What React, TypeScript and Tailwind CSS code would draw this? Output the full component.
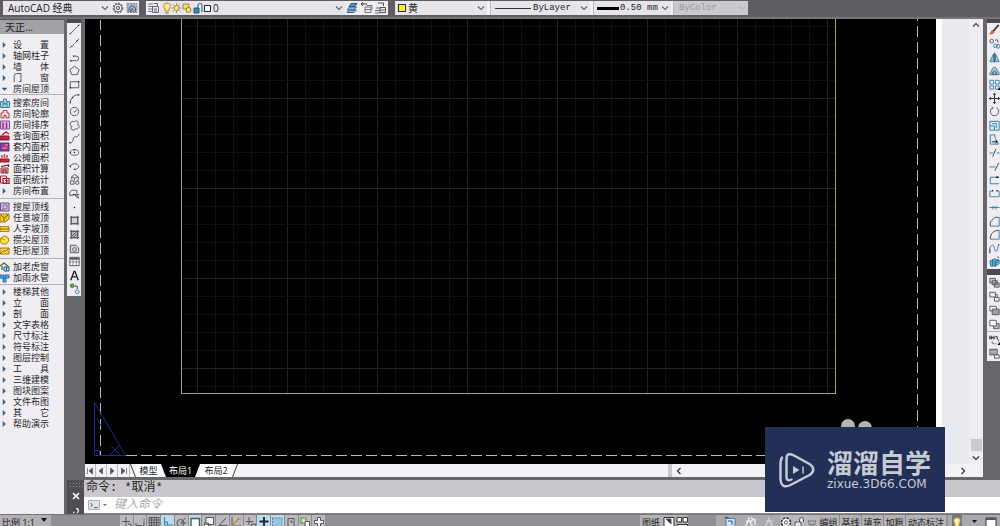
import type { ReactNode } from "react";
import clsx from "clsx";

/* ---------- shared bits ---------- */

type IconProps = { children: ReactNode; box?: number; className?: string };

function Icon({ children, box = 14, className = "size-3.5" }: IconProps) {
  return (
    <svg
      viewBox={`0 0 ${box} ${box}`}
      className={clsx("shrink-0", className)}
      fill="none"
      stroke="#55555c"
      strokeWidth="1"
      aria-hidden="true"
    >
      {children}
    </svg>
  );
}

function Chevron({ className = "text-[#6b6a70]" }: { className?: string }) {
  return (
    <svg viewBox="0 0 8 8" className={clsx("size-2 shrink-0", className)} fill="none" stroke="currentColor" strokeWidth="1.2" aria-hidden="true">
      <path d="M1 2.5 4 5.5 7 2.5" />
    </svg>
  );
}

/* ---------- top toolbar ---------- */

type ComboProps = {
  label: string;
  value: string;
  className: string;
  selectClass?: string;
  icon?: ReactNode;
  disabled?: boolean;
};

function Combo({ label, value, className, selectClass, icon, disabled }: ComboProps) {
  return (
    <div className={clsx("flex h-full items-center pr-0.5", disabled ? "bg-[#cbc9cd]" : "bg-[#e7e5e9]", className)}>
      {icon}
      <select
        aria-label={label}
        disabled={disabled}
        className={clsx("h-full min-w-0 flex-1 appearance-none bg-transparent leading-3 outline-none", disabled ? "text-[#99979c]" : "text-[#222226]", selectClass)}
      >
        <option>{value}</option>
      </select>
      <Chevron className={disabled ? "text-[#b5b3b8]" : "text-[#6b6a70]"} />
    </div>
  );
}

function ToolButton({ label, children }: { label: string; children: ReactNode }) {
  return (
    <button type="button" aria-label={label} className="flex shrink-0 items-center justify-center">
      {children}
    </button>
  );
}

const mono = "font-['Liberation_Mono','Noto_Sans_CJK_SC',monospace] text-[9px]";

function TopBar() {
  return (
    <header className="flex h-[19px] shrink-0 items-start border-b-2 border-[#77757a] bg-[#5f5d62] pt-px pl-[3px]">
      <div className="flex h-3.5 w-[136px] shrink-0 items-center bg-[#efedf1]">
        <Combo label="工作空间" value="AutoCAD 经典" className="w-[108px]" selectClass="pl-[5px] text-[10px]" />
        <ToolButton label="工作空间设置">
          <Icon>
            <circle cx="7" cy="7" r="4.6" strokeDasharray="2 1" strokeWidth="1.6" stroke="#77767c" />
            <circle cx="7" cy="7" r="4" stroke="#77767c" />
            <circle cx="7" cy="7" r="1.6" />
          </Icon>
        </ToolButton>
        <ToolButton label="我的工作空间">
          <Icon>
            <path d="M2 2.5h10v9H2z" fill="#a9b6c6" stroke="#7d8794" strokeDasharray="2 1" />
            <path d="M4 11V7l3-2.5L10.500 7v4M6 11V8h2v3" stroke="#4c5a6c" />
          </Icon>
        </ToolButton>
      </div>

      <div className="ml-[7px] flex h-3.5 w-[242px] shrink-0 items-center bg-[#efedf1]">
        <ToolButton label="图层特性管理器">
          <Icon>
            <path d="M2 3h5M2 5.500h5M2 8h4M2 10.500h4" stroke="#6c7d92" strokeWidth="1.2" />
            <path d="M6.500 5.500h6v6h-6zM8 2.500h3.500v3M8 8h3M8 10h3" stroke="#5e6671" />
          </Icon>
        </ToolButton>
        <Combo
          label="图层"
          value="0"
          className="w-[185px]"
          selectClass="pl-px text-[10px]"
          icon={
            <svg viewBox="0 0 50 14" className="ml-0.5 h-3.5 w-[50px] shrink-0" fill="none" aria-hidden="true">
              <path d="M3 8C.5 5 2 2 5 2s4.500 3 2 6v2H3z" fill="#ffe98c" stroke="#b08e3c" />
              <path d="M3.500 12h3" stroke="#666" />
              <circle cx="14.500" cy="7" r="2.500" fill="#ffe47a" stroke="#a88a44" />
              <path d="M14.500 2v2M14.500 10v2M9.500 7h2M17.500 7h2M11 3.500l1.300 1.300M16.700 9.200 18 10.500M18 3.500l-1.300 1.300M12.300 9.200 11 10.500" stroke="#a88a44" />
              <path d="M21 3h6v5h-6z" fill="#f5d878" stroke="#a58a4a" />
              <circle cx="26.500" cy="9" r="2.500" fill="#ffe06b" stroke="#8f7947" />
              <path d="M32 7h5v5h-5z" fill="#3c86ad" stroke="#2b5b78" />
              <path d="M36 7V4.500a1.800 1.800 0 0 1 4 0V11" stroke="#3f6d86" strokeWidth="1.200" />
              <path d="M42.500 4.500h6v6h-6z" fill="#fff" stroke="#222" />
            </svg>
          }
        />
        <div className="flex">
          <ToolButton label="将对象的图层置为当前">
            <Icon>
              <path d="m2 9 2.500-3h7L9 9zM2 11.500 4.500 9h7L9 11.500z" fill="#8cb6d2" stroke="#3c6c8c" />
              <path d="m4 5.500 2-3h6l-2 3z" fill="#5694ba" stroke="#2f5f80" />
            </Icon>
          </ToolButton>
          <ToolButton label="上一个图层">
            <Icon>
              <path d="M2 3h6M4 1.500 2 3l2 1.500" stroke="#333" />
              <path d="M6 6h6v5.500H6zM6 8.500h6M8 5.500V4.500h5v4" stroke="#77757b" />
            </Icon>
          </ToolButton>
          <ToolButton label="图层状态管理器">
            <Icon>
              <path d="M2 9.500h5M2 12h5M3 7h4" stroke="#666" />
              <path d="M7 6.500h5.500v5H7zM5 2h5.500v3M7.500 9h5" stroke="#555" />
            </Icon>
          </ToolButton>
        </div>
      </div>

      <div className="ml-[7px] flex h-3.5 w-[353px] shrink-0 items-center bg-[#f4f2f5]">
        <Combo
          label="颜色"
          value="黄"
          className="w-[92px]"
          selectClass="pl-0.5 font-['Noto_Sans_CJK_SC',sans-serif] text-[10px]"
          icon={<span className="ml-[3px] size-2 shrink-0 border border-[#333] bg-[#f6f032]" />}
        />
        <Combo
          label="线型"
          value="ByLayer"
          className="ml-[3px] w-[100px] border-l border-[#b9b7bb]"
          selectClass={clsx("pl-0.5", mono)}
          icon={<span className="ml-1 h-px w-9 shrink-0 bg-[#333]" />}
        />
        <Combo
          label="线宽"
          value="0.50 mm"
          className="ml-[3px] w-[78px] border-l border-[#b9b7bb]"
          selectClass={clsx("pl-px", mono)}
          icon={<span className="ml-[3px] h-[3px] w-[22px] shrink-0 bg-black" />}
        />
        <Combo label="打印样式" value="ByColor" disabled className="ml-0.5 flex-1 border-l border-[#b9b7bb]" selectClass={clsx("pl-[5px]", mono)} />
      </div>
    </header>
  );
}

/* ---------- left menu ---------- */

type MenuEntry = { name: string; icon?: ReactNode; open?: boolean };

const menuGroups: MenuEntry[][] = [
  [{ name: "设　　置" }, { name: "轴网柱子" }, { name: "墙　　体" }, { name: "门　　窗" }, { name: "房间屋顶", open: true }],
  [
    { name: "搜索房间", icon: <path d="M.5 9.500v-6h3V1h3v2.500h3v6zM3 9V6h4v3M2 5h6" stroke="#3f7ca0" fill="#b8d7e6" /> },
    { name: "房间轮廓", icon: <path d="M1 9V4h2V1.500h4V4h2v5H6V6.500H4V9z" stroke="#b03848" fill="#f8dfe2" /> },
    {
      name: "房间排序",
      icon: (
        <>
          <path d="M.5 1h9v8h-9z" fill="#d6bfe8" stroke="#7a4ba8" />
          <path d="M3 2.500v6M6.500 2.500v6" stroke="#b02060" strokeWidth="1.500" />
        </>
      ),
    },
    {
      name: "查询面积",
      icon: (
        <>
          <path d="M0 5h9v4H0z" fill="#c4283c" stroke="#7d1c30" />
          <path d="M2 4 6 1l3 2M3 7h5" stroke="#c4283c" strokeWidth="1.500" />
        </>
      ),
    },
    {
      name: "套内面积",
      icon: (
        <>
          <path d="M0 1h9v8H0z" fill="#8a3a9a" stroke="#4e3090" />
          <path d="M2 6h5M5 3h3" stroke="#f4637a" strokeWidth="2" />
        </>
      ),
    },
    {
      name: "公摊面积",
      icon: (
        <>
          <path d="M0 6h9v3H0z" fill="#c4283c" stroke="#8c1c30" />
          <path d="M2 5V2M4.500 5V1M7 5V2" stroke="#d43848" strokeWidth="1.500" />
        </>
      ),
    },
    {
      name: "面积计算",
      icon: (
        <>
          <path d="M1 4h7v5H1z" fill="#f0b0b4" stroke="#b02838" />
          <path d="M1 2.500 8.500 1v2M3 9V6h3v3" stroke="#4b2830" strokeWidth="1.200" />
        </>
      ),
    },
    {
      name: "面积统计",
      icon: (
        <>
          <path d="M.5 1h6v7h-6z" fill="#fbe6e8" stroke="#b02838" />
          <path d="M3 3.500h6v5H3zM5 5.500h2v2" stroke="#a01c2c" strokeWidth="1.200" />
        </>
      ),
    },
    { name: "房间布置" },
  ],
  [
    {
      name: "搜屋顶线",
      icon: (
        <>
          <path d="M.5 1h8.500v8H.5z" fill="#c9cdf0" stroke="#4d54a0" />
          <path d="M3 3h4v4H3zM1 9l2-2" stroke="#c04858" />
        </>
      ),
    },
    {
      name: "任意坡顶",
      icon: (
        <>
          <path d="M0 1h9v5L5 9H0z" fill="#f3cc2e" stroke="#a07808" />
          <path d="m1 2 3 3 4-3M4 5v3" stroke="#7d5c04" />
        </>
      ),
    },
    {
      name: "人字坡顶",
      icon: (
        <>
          <path d="M0 2.500h9v5H0z" fill="#f8d644" stroke="#b08408" />
          <path d="M0 5h9" stroke="#8f6c08" />
        </>
      ),
    },
    {
      name: "攒尖屋顶",
      icon: (
        <>
          <path d="M1 3 4 .8 8 2.500 9 6 6 9H2L0 6z" fill="#ffe03a" stroke="#b08408" />
          <path d="M4.500 5 1 3" stroke="#b08408" />
        </>
      ),
    },
    {
      name: "矩形屋顶",
      icon: (
        <>
          <path d="M0 2h9v6H0z" fill="#f8d644" stroke="#a07808" />
          <path d="m0 8 3-3h3l3-3" stroke="#8f6c08" />
        </>
      ),
    },
  ],
  [
    {
      name: "加老虎窗",
      icon: (
        <>
          <path d="M0 4 4 1l5 4M2 4v4" stroke="#4c6a2c" strokeWidth="1.300" />
          <path d="M4 5h5v4H4zM6.500 5v4" fill="#b9dcf0" stroke="#1e5f8c" />
        </>
      ),
    },
    { name: "加雨水管", icon: <path d="M0 2h4v3H0zM5 2h4v3H5zM3 5h3v4H3z" fill="#5aa4dc" stroke="#2470b0" /> },
  ],
  [
    { name: "楼梯其他" },
    { name: "立　　面" },
    { name: "剖　　面" },
    { name: "文字表格" },
    { name: "尺寸标注" },
    { name: "符号标注" },
    { name: "图层控制" },
    { name: "工　　具" },
    { name: "三维建模" },
    { name: "图块图案" },
    { name: "文件布图" },
    { name: "其　　它" },
    { name: "帮助演示" },
  ],
];

const groupSpacing = ["", "py-0.5", "py-0.5", "pt-0.5 pb-px", "pt-px"];

function MenuRow({ name, icon, open }: MenuEntry) {
  return (
    <li>
      <button type="button" className="flex h-[11px] w-full items-center gap-[3px] text-left text-[9px] leading-[11px] whitespace-nowrap text-[#26262a]">
        <Icon box={10} className="size-2.5">
          {icon ?? <path d={open ? "M2 4h5L4.500 6.500z" : "M3 2.500v5L5.500 5z"} fill="#2f5f86" stroke="#2f5f86" strokeWidth="0.500" />}
        </Icon>
        {name}
      </button>
    </li>
  );
}

function SideMenu() {
  return (
    <aside className="flex w-16 shrink-0 flex-col border-t border-[#55535a] bg-[#f0eef2]">
      <h2 className="h-3.5 bg-[#a3a1a5] pl-[5px] text-[10px] leading-[14px] text-[#222226]">天正...</h2>
      <nav className="mt-[5px] divide-y divide-[#b4b2b7]">
        {menuGroups.map((group, i) => (
          <ul key={i} className={groupSpacing[i]}>
            {group.map((entry) => (
              <MenuRow key={entry.name} {...entry} />
            ))}
          </ul>
        ))}
      </nav>
    </aside>
  );
}

/* ---------- vertical toolbars ---------- */

type Tool = { label: string; art: ReactNode };

const dot = (x: number, y: number) => <path d={`M${x - 0.7} ${y}h1.400`} stroke="#222" strokeWidth="1.400" />;

const drawTools: Tool[] = [
  { label: "直线", art: <>{dot(2.500, 11.500)}<path d="M2.500 11.500 11.500 2.500" />{dot(11.500, 2.500)}</> },
  { label: "构造线", art: <>{dot(4, 10)}{dot(10, 4)}<path d="m2 12 10-10" strokeDasharray="3 1" /></> },
  { label: "多段线", art: <><path d="M3 10.500h6a2.500 2.500 0 0 0 0-5H6.500" />{dot(3, 10.500)}{dot(6, 5.500)}</> },
  { label: "多边形", art: <path d="m7 2.500 5 3.600-2 5.400H4L2 6.100z" /> },
  { label: "矩形", art: <><path d="M2.500 4h9v6.500h-9z" />{dot(2.500, 10.500)}{dot(11.500, 4)}</> },
  { label: "圆弧", art: <><path d="M2.500 11.500C3 6.500 6 3 11.500 3" />{dot(2.500, 11.500)}{dot(5, 6)}{dot(11.500, 3)}</> },
  { label: "圆", art: <><circle cx="7" cy="7" r="4.500" /><path d="M6 7.500h1.500L9.500 5" /></> },
  { label: "修订云线", art: <path d="M7 3.200C7.500 1.500 11 1.500 11 4c0 1-.5 1.500-1 2 2 0 2.500 2 1.500 3.500S8.500 11 8 10.500C7.500 12.500 4 12.500 3.500 10.500 3 9 4 8.300 4.500 8 2.500 8 2 6.500 2.500 4.500S6 2 7 3.200z" /> },
  { label: "样条曲线", art: <><path d="M2 11.500c3 1 3-2.500 4-5s3-1 4-1.500 1.500-1.500 2-3" />{dot(2, 11.500)}</> },
  { label: "椭圆", art: <><ellipse cx="7" cy="7" rx="4.500" ry="3" />{dot(7, 7)}{dot(7, 4)}{dot(2.500, 7)}</> },
  { label: "椭圆弧", art: <><path d="M2.500 7C3 3 11.500 3 11.500 7c0 2-2 3-4 3" />{dot(2.500, 7)}{dot(7, 10)}</> },
  { label: "插入块", art: <><path d="M4 7V4l3-2.500L11 4v4L8.500 9.500M4 4l3 1.500L11 4M7 5.500V8M2.500 8.500h4v3.500h-4z" /><circle cx="10" cy="10.500" r="1.800" /></> },
  { label: "创建块", art: <><path d="M9.500 7V3.500H4L2 5.500V9h4M6 8h6M10 8l1.500 4-4-2.500z" />{dot(6, 8)}</> },
  { label: "点", art: dot(7, 7) },
  { label: "图案填充", art: <><path d="M3.500 3.500h7v7h-7z" fill="#d3d2d7" /><path d="M2 3.500h10M2 10.500h10M3.500 2v10M10.500 2v10" /></> },
  { label: "渐变色", art: <><path d="M3.500 3.500h7v7h-7z" fill="#b6b5ba" /><path d="M2 3.500h10M2 10.500h10M3.500 2v10M10.500 2v10M4 9l5-5M6 10l4-4" /></> },
  { label: "面域", art: <><path d="M2.500 3.500h6l3 3v5h-9z" fill="#dcdbe0" /><circle cx="7" cy="8" r="2" /></> },
  { label: "表格", art: <><path d="M2 2.500h10v9H2z" fill="#fff" /><path d="M2 4h10" strokeWidth="2" /><path d="M5.500 4v7.500M9 4v7.500M2 7.500h10" strokeWidth="0.700" /></> },
  { label: "多行文字", art: <path d="M3 12 6.500 2.500h1L11 12M4.300 8.500h5.400" stroke="#222" strokeWidth="1.500" /> },
  { label: "添加选定对象", art: <><circle cx="4.500" cy="4" r="2" fill="#66b04c" stroke="#3f7f30" /><circle cx="10" cy="10.500" r="2" stroke="#3c86ad" /><path d="M7 4.500h3v3" stroke="#333" /></> },
];

const blue = "#3b7ea6";

const modifyTools: Tool[] = [
  { label: "删除", art: <><path d="m5.500 9 6-7" stroke="#5b3a2a" strokeWidth="2" /><path d="M2 12 6.500 10.500 4.500 8z" fill="#d46c4a" stroke="#c05a3a" /></> },
  { label: "复制", art: <><circle cx="4" cy="4.500" r="2" /><circle cx="8" cy="9.500" r="2" stroke={blue} /><circle cx="11" cy="10" r="2" stroke={blue} /><path d="M7.500 3.500 10 3l1 3" /></> },
  { label: "镜像", art: <><path d="M6 3v8.500H2zM8 3v8.500h4z" fill="#9fc2d8" stroke={blue} /><path d="M7 1.500v11" /></> },
  { label: "偏移", art: <><path d="M2 11.500C2 8 3.500 8 4 8c0-6 6-6 6 0 1 0 2 0 2 3.500z" fill="#a8c8dc" stroke={blue} /><path d="M4.500 11V9.500h1.200c0-2.500 2.600-2.500 2.600 0h1.200V11z" /></> },
  { label: "阵列", art: <><path d="M2 2.500h4v4H2zM8 2.500h4v4H8zM2 8.500h4v3.500H2zM8 8.500h4v3.500H8z" stroke={blue} /><path d="m13 10-3 3h3z" fill="#111" stroke="none" /></> },
  { label: "移动", art: <path d="M7 1.500v11M1.500 7h11M5.500 3 7 1.500 8.500 3M5.500 11 7 12.500 8.500 11M3 5.500 1.500 7 3 8.500M11 5.500 12.500 7 11 8.500" stroke="#222" /> },
  { label: "旋转", art: <path d="M5 3a4.500 4.500 0 1 0 4 0M4 1.500 5.500 3 4 5" /> },
  { label: "缩放", art: <><path d="M2 2.500h10v9.500H2z" fill="#dceaf3" stroke={blue} /><path d="M2 7.500h5V12M4.500 5H9v4.500" stroke={blue} /></> },
  { label: "拉伸", art: <><path d="M2.500 2h5v3l4 7h-9z" stroke={blue} fill="#e4eef5" /><path d="M4 9.500h6M8 8l2 1.500L8 11" stroke="#111" /></> },
  { label: "修剪", art: <><path d="M1.500 7.500H6M9.500 7.500h3" stroke={blue} strokeDasharray="4 1" /><path d="M5 11.500 8.500 3" stroke="#444" /></> },
  { label: "延伸", art: <><path d="M1.500 7.500H8" stroke={blue} /><path d="M7.500 11.500 11.500 3" stroke="#444" /></> },
  { label: "打断于点", art: <><path d="M12 3.500H2.500v7H12" stroke={blue} /><path d="M8.500 3.500h3" stroke="#222" strokeWidth="1.500" /></> },
  { label: "打断", art: <><path d="M5 4.500H2v6h10v-6H9.500" stroke={blue} />{dot(5, 4)}{dot(9.500, 4)}</> },
  { label: "合并", art: <><path d="M1.500 7h11" stroke={blue} /><path d="M4.500 5 6.500 7l-2 2M9.500 5l-2 2 2 2" stroke={blue} /></> },
  { label: "倒角", art: <><path d="M2.500 12V7.500l5-5H12" stroke="#444" /><path d="M12 2.500V12H2.500" stroke={blue} /></> },
  { label: "圆角", art: <><path d="M2.500 12c0-6 3-9.500 9.500-9.500" stroke="#444" /><path d="M12 2.500V12H2.500" stroke={blue} /></> },
  { label: "光顺曲线", art: <><path d="M2 12V7" stroke="#444" strokeWidth="1.300" /><path d="M2 7c2-5 4-5 5 0s3 4 4-3" stroke={blue} />{dot(11.500, 3)}</> },
  { label: "分解", art: <><path d="M2 6.500 7 4l5 1.500v4L8 12H3z" fill="#6ca6c8" stroke={blue} /><path d="M5 5v6M8 7v5M8 7l4-1.500M10 2l2 1" stroke="#255f86" /></> },
];

const orderTools: Tool[] = [
  { label: "前置", art: <path d="M2 2.500h6v5H2zM4.500 5h5.500v4.500H4.500zM7 7.500h5V12H7z" fill="#c9c8cd" /> },
  { label: "后置", art: <path d="M2 2.500h6v5H2zM8 5h2v3M7 8h5v4H7z" fill="#efedf1" /> },
  { label: "置于对象之上", art: <><path d="M2 2.500h7v5H2z" fill="#fff" /><path d="M4.500 5.500h7.500v6H4.500z" fill="#9f9ea4" /></> },
  { label: "置于对象之下", art: <><path d="M6 6h6v5.500H6z" fill="#b6b5ba" /><path d="M2 2.500h7v6H2z" fill="#fff" /></> },
];

const annotationTools: Tool[] = [
  { label: "文字前置", art: <><path d="M2 3v4M4 3v4M6.500 3v4M2 5h5M8 4h2v3" stroke="#222" /><path d="M4.500 9v2.500H9M11.500 7v4" strokeDasharray="2 1" /><path d="m13 10-3 3h3z" fill="#111" stroke="none" /></> },
  { label: "图案填充后置", art: <><path d="M2 2.500h8v6H2z" fill="#8f8e94" /><path d="M2 4.500h8M2 6.500h8" stroke="#fff" strokeWidth="0.500" /><path d="M7 8.500h5V12H7z" fill="#efedf1" /></> },
];

function ToolColumn({ tools, className }: { tools: Tool[]; className: string }) {
  return (
    <div className={clsx("flex flex-col items-center justify-around bg-[#efedf1]", className)}>
      {tools.map((tool) => (
        <button key={tool.label} type="button" aria-label={tool.label} className="flex">
          <Icon className="size-[13px]">{tool.art}</Icon>
        </button>
      ))}
    </div>
  );
}

/* ---------- drawing area ---------- */

const gridColumns = Array.from({ length: 36 }, (_, i) => 112 + i * 18);
const gridRows = Array.from({ length: 21 }, (_, i) => 7 + i * 18);

function Drawing() {
  return (
    <svg viewBox="0 0 851 445" className="min-w-0 flex-1 bg-black" fill="none" role="img" aria-label="布局1">
      <g shapeRendering="crispEdges">
        {gridColumns.map((x, i) => (
          <path key={x} d={`M${x + 0.5} 0V374`} stroke={i % 5 === 0 ? "#202025" : "#101013"} />
        ))}
        {gridRows.map((y, i) => (
          <path key={y} d={`M97 ${y + 0.5}H750`} stroke={i % 5 === 4 ? "#202025" : "#101013"} />
        ))}
        <path d="M96.500 0V374.500H750.500V0" stroke="#a3a068" />
        <path d="M15.500 1V436.500" stroke="#b8b8b8" strokeDasharray="11 5" strokeDashoffset="1" />
        <path d="M832.500 0V436.500" stroke="#b8b8b8" strokeDasharray="11 5" strokeDashoffset="9" />
        <path d="M41 436.500H832" stroke="#b8b8b8" strokeDasharray="11 4" />
      </g>
      {/* layout-space UCS icon */}
      <g stroke="#1c2f8f">
        <path d="M9.500 383.500V436.500H40.500Z" />
        <path d="M9.500 431.500h5v5M26 427l9 9M34 427l-9 9M12 400l5 8" />
      </g>
    </svg>
  );
}

const pagerArt = [
  { label: "第一个布局", d: "M2.500 2v6M7.500 2v6L4 5z" },
  { label: "上一个布局", d: "M6.500 2v6L3 5z" },
  { label: "下一个布局", d: "M3.500 2v6L7 5z" },
  { label: "最后一个布局", d: "M7.500 2v6M2.500 2v6L6 5z" },
];

function LayoutTabs() {
  return (
    <div className="flex h-[13px] shrink-0 items-stretch bg-[#f3f1f4] text-[9px] leading-[13px] text-[#222226]">
      <div className="flex divide-x divide-[#bbb9be] border-r border-[#bbb9be]">
        {pagerArt.map((p) => (
          <button key={p.label} type="button" aria-label={p.label} className="flex w-[11px] items-center justify-center">
            <Icon box={10} className="size-2.5">
              <path d={p.d} fill="#555459" stroke="#555459" strokeWidth="0.700" />
            </Icon>
          </button>
        ))}
      </div>
      <svg viewBox="0 0 6 13" className="h-full w-1.5" stroke="#444" aria-hidden="true">
        <path d="m.5 0 5 13" />
      </svg>
      <button type="button" className="w-[25px] bg-white">模型</button>
      <button type="button" aria-current="page" className="w-[39px] bg-black text-white [clip-path:polygon(0_0,100%_0,calc(100%-5px)_100%,5px_100%)]">
        布局1
      </button>
      <button type="button" className="w-8 bg-white">布局2</button>
      <svg viewBox="0 0 6 13" className="h-full w-1.5" stroke="#444" aria-hidden="true">
        <path d="m5.500 0-5 13" />
      </svg>
      <div className="flex-1" />
      <div className="flex w-[315px] items-center border-l-4 border-[#c9c7cb] pr-4 pl-[3px]">
        <button type="button" aria-label="向左滚动">
          <Chevron className="rotate-90 text-[#333]" />
        </button>
        <div className="flex-1" />
        <button type="button" aria-label="向右滚动">
          <Chevron className="-rotate-90 text-[#333]" />
        </button>
      </div>
    </div>
  );
}

function DrawingWindow() {
  return (
    <section className="flex min-w-0 flex-1 flex-col">
      <div className="flex min-h-0 flex-1">
        <Drawing />
        <div className="w-1.5 bg-white" />
        <div className="w-[27px] bg-[#e9eaef]" />
        <div className="flex w-[14px] flex-col items-center bg-[#f0edf1] pt-0.5 pb-0.5">
          <button type="button" aria-label="向上滚动" className="flex">
            <Chevron className="rotate-180 text-[#444]" />
          </button>
          <div className="flex-1" />
          <div className="h-3 w-[11px] bg-[#cbc9cd]" />
          <button type="button" aria-label="向下滚动" className="mt-[3px] flex">
            <Chevron className="text-[#333]" />
          </button>
        </div>
      </div>
      <LayoutTabs />
    </section>
  );
}

/* ---------- command line ---------- */

function CommandLine() {
  return (
    <section className="flex h-[34px] shrink-0 pl-[3px]">
      <div className="flex w-[17px] flex-col items-center bg-[#504e53]">
        <div className="mt-0.5 h-[5px] w-3.5 bg-[radial-gradient(#8b898e_1px,transparent_1px)] bg-size-[3px_3px]" />
        <button type="button" aria-label="关闭" className="mt-[5px] flex">
          <svg viewBox="0 0 8 8" className="size-2" stroke="#fff" strokeWidth="1.600" aria-hidden="true">
            <path d="m1 1 6 6M7 1 1 7" />
          </svg>
        </button>
        <button type="button" aria-label="自定义" className="mt-1.5 flex">
          <svg viewBox="0 0 8 8" className="size-2" fill="none" stroke="#e5e5e5" strokeWidth="1.400" aria-hidden="true">
            <path d="M1 6.500h1.500M4 2.500c3 0 3 3 1 4.500" />
          </svg>
        </button>
      </div>
      <div className="flex min-w-0 flex-1 flex-col border-b border-[#8a888d] font-['Liberation_Mono','Noto_Sans_CJK_SC',monospace] text-xs">
        <output className="h-[17px] bg-[#c9c7cb] pl-0.5 leading-[17px] text-[#1d1d20]">命令: *取消*</output>
        <div className="flex flex-1 items-center bg-white pl-1">
          <Icon box={12} className="size-3">
            <path d="M.5 1.500h11v9H.5z" fill="#dfe3ea" stroke="#a8adb8" />
            <path d="m2.500 4 2 2-2 2M6 8.500h3.500" stroke="#555a66" />
          </Icon>
          <svg viewBox="0 0 6 6" className="ml-0.5 size-1.5" aria-hidden="true">
            <path d="M1 2h4L3 4z" fill="#777" />
          </svg>
          <input
            type="text"
            aria-label="命令"
            placeholder="键入命令"
            className="ml-1.5 h-4 min-w-0 flex-1 bg-transparent italic outline-none placeholder:text-[#a9a9ad]"
          />
        </div>
      </div>
    </section>
  );
}

/* ---------- status bar ---------- */

const modeToggles: (Tool & { on?: boolean })[] = [
  { label: "推断约束", art: <path d="M7 2v9M3 6.500h8M9 9h3v3" /> },
  { label: "捕捉模式", art: <path d="M3 10.500h8v-7M3 8v2.500" strokeDasharray="6 1" /> },
  { label: "栅格显示", art: <path d="M2 2.500h10v10H2zM2 5h10M2 7.500h10M2 10h10M4.500 2.500v10M7 2.500v10M9.500 2.500v10" /> },
  { label: "正交模式", on: true, art: <path d="M3.500 2v8H12M3.500 7h3v3" stroke="#3c7f9c" /> },
  { label: "极轴追踪", art: <><circle cx="6.500" cy="8" r="3.500" /><path d="M6.500 8h5.500M6.500 8l5-5" /></> },
  { label: "对象捕捉", on: true, art: <path d="M3 3.500h8.500v9H3z" fill="#f5fafc" strokeWidth="1.400" /> },
  { label: "三维对象捕捉", art: <path d="M4 2.500h7.500v7H4zM2.500 8h4v4h-4z" fill="#f5f5f5" /> },
  { label: "对象捕捉追踪", art: <path d="m10 3-7 7.500h8.500" /> },
  { label: "动态UCS", art: <><path d="M3 2v9h9" /><path d="m3 11 7-8M8 5l4-2" stroke="#c08a2e" strokeWidth="1.300" /></> },
  { label: "动态输入", art: <path d="M6 2v8M3 6.500h7M8.500 9h4v3h-4z" /> },
  { label: "线宽", on: true, art: <path d="M7 2v9M2.500 6.500h9" stroke="#15242c" strokeWidth="1.800" /> },
  { label: "透明度", on: true, art: <path d="M2.500 3h9.500v9.500H2.500z" fill="#9cc4e0" stroke="#5b87a6" strokeDasharray="2 1" /> },
  { label: "快捷特性", art: <path d="M4 3.500h6v8H4zM6 6h2v2" /> },
  { label: "选择循环", art: <><path d="M3 3h5v5H3z" fill="#cfe7c4" stroke="#5c9348" /><path d="M7 6.500h4.500V12H7z" fill="#fff" /></> },
  { label: "注释监视器", art: <path d="M5.500 2.500h3v3h3v3h-3v3h-3v-3h-3v-3h3z" fill="#fff" /> },
];

function StatusButton({ label, art, on }: Tool & { on?: boolean }) {
  return (
    <button type="button" aria-label={label} aria-pressed={on} className={clsx("flex h-full flex-1 justify-center overflow-hidden", on && "bg-[#b9dcea]")}>
      <Icon>{art}</Icon>
    </button>
  );
}

function StatusBar() {
  return (
    <footer className="flex h-3 shrink-0 items-start overflow-hidden border-t border-[#77757a] bg-[#918f94] text-[9px] leading-4 whitespace-nowrap text-[#1d1d20]">
      <button type="button" className="flex w-[51px] items-center bg-[#b2b0b4] pl-0.5 text-left">
        比例 1:1
        <svg viewBox="0 0 6 6" className="mb-1.5 ml-1.5 size-1.5" aria-hidden="true">
          <path d="M0 1h6L3 5z" fill="#111" />
        </svg>
      </button>
      <div className="ml-[69px] flex h-full w-[205px] divide-x divide-[#8d8b90] bg-[#bbb9bd]">
        {modeToggles.map((m) => (
          <StatusButton key={m.label} {...m} />
        ))}
      </div>
      <div className="flex-1" />
      <div className="flex h-full bg-[#b5b3b7]">
        <button type="button" className="w-[22px] shrink-0">图纸</button>
        <div className="flex w-[26px]">
          <StatusButton label="快速查看布局" art={<><path d="M2 2.500h10v10H2z" fill="#fff" stroke="#333" /><path d="m4 4 5 5V4z" fill="#333" /></>} />
          <StatusButton label="快速查看图形" art={<path d="M2 2.500h4.500V7H2zM8 2.500h4.500V7H8zM2 9.500h10.500v3H2z" fill="#f5f5f5" stroke="#333" />} />
        </div>
      </div>
      <div className="ml-7 flex h-full w-16 bg-[#aba9ad] pl-1">
        <StatusButton label="最大化视口" art={<><path d="M3 3.500h9v9H3z" fill="#d7e6f3" stroke="#4c78a0" /><path d="M5 6h4v4M1.500 2.500h4" stroke="#2b4d78" /></>} />
        <StatusButton label="注释可见性" art={<path d="M6 2v3L2.500 11M6 5l3.500 6M3 6h7M8 3l4 2v5" stroke="#e9f2f8" strokeWidth="1.400" />} />
        <StatusButton label="自动缩放" art={<path d="M6 2v3L2.500 11M6 5l3.500 6M3 6h7" stroke="#d8d6da" strokeWidth="1.200" />} />
      </div>
      <div className="flex h-full w-[38px] bg-[#bbb9bd]">
        <StatusButton label="切换工作空间" art={<><circle cx="7" cy="7.500" r="4.500" fill="#fff" stroke="#333" strokeWidth="1.600" strokeDasharray="2.500 1" /><circle cx="7" cy="7.500" r="1.700" /></>} />
        <StatusButton label="锁定" art={<path d="M3 7h6v5H3zM7.500 7V4.500a2 2 0 0 1 4 0V7" fill="#e5e3e7" />} />
        <StatusButton label="更多" art={<path d="M3 6h8L9 11H5zM5 8.500l2 1.500 2-1.500" stroke="#77757a" />} />
      </div>
      <div className="flex h-full divide-x divide-[#8d8b90] bg-[#b5b3b7]">
        {["编组", "基线", "填充", "加粗"].map((name) => (
          <button key={name} type="button" className="w-[22px]">
            {name}
          </button>
        ))}
        <button type="button" className="w-10">动态标注</button>
      </div>
      <div className="ml-0.5 flex h-full w-[52px] bg-[#aba9ad]">
        <StatusButton label="隔离对象" art={<><path d="M2 0h10v14H2z" fill="#77757a" stroke="none" /><path d="M5 8C3 5.500 4 3 7 3s4 2.500 2 5v3H5z" fill="#fff3a6" stroke="#d0b860" /></>} />
        <StatusButton label="状态栏菜单" art={<path d="M5 5h5L7.500 8z" fill="#111" stroke="none" />} />
        <StatusButton label="全屏显示" art={<><path d="M2 3h10v9.500H2z" fill="#fff" stroke="#333" /><path d="M2 4h10" strokeWidth="2" /></>} />
      </div>
    </footer>
  );
}

/* ---------- brand card over the lower right corner ---------- */

function BrandCard() {
  return (
    <div className="absolute right-[55px] bottom-3.5">
      <div className="absolute -top-2 left-[76px] flex gap-[3px]" aria-hidden="true">
        <span className="size-3.5 rounded-full bg-[#b4b4b4]" />
        <span className="mt-0.5 size-3.5 rounded-full bg-[#b4b4b4]" />
      </div>
      <div className="relative flex h-[85px] w-[180px] items-center gap-3 bg-[#222f56] pl-3.5 text-[#c5cad3]">
        <svg viewBox="0 0 36 36" className="size-9 shrink-0" fill="none" stroke="currentColor" strokeWidth="2.500" strokeLinecap="round" aria-hidden="true">
          <path d="M3 5.500C1.500 8 1.500 10 1.500 12v14c0 8 4 10 10 7l19-10c5-3 5-8 0-11L15 3.500C10 1 7.500 2 7.500 7v18c0 3 2 4 5 2.500" />
          <path d="M14 14v8l6.500-4z" fill="currentColor" stroke="none" />
          <path d="M24 15v6" strokeWidth="1.500" />
        </svg>
        <div className="whitespace-nowrap">
          <p className="text-[26px] leading-7 font-bold">溜溜自学</p>
          <p className="font-['DejaVu_Sans',sans-serif] text-xs leading-[14px]">zixue.3D66.COM</p>
        </div>
      </div>
    </div>
  );
}

export default function App() {
  return (
    <div className="relative flex h-screen flex-col overflow-hidden bg-[#68666b] font-['Open_Sans','Noto_Sans_CJK_SC',sans-serif]">
      <TopBar />
      <main className="flex min-h-0 flex-1">
        <SideMenu />
        <div className="flex min-w-0 flex-1 flex-col">
          <div className="mb-[3px] flex min-h-0 flex-1">
            <div className="w-[21px] shrink-0 px-[3px]">
              <div className="mr-px border-t-4 border-[#4d4b50]">
                <ToolColumn tools={drawTools} className="h-[273px]" />
              </div>
            </div>
            <DrawingWindow />
            <div className="w-[17px] shrink-0 overflow-hidden pl-1">
              <div className="w-3.5 border-t-4 border-[#4d4b50]">
                <ToolColumn tools={modifyTools} className="h-[246px]" />
                <div className="h-1.5 bg-[#4d4b50]" />
                <ToolColumn tools={orderTools} className="h-14" />
                <div className="h-px bg-[#b4b2b7]" />
                <ToolColumn tools={annotationTools} className="h-[29px]" />
              </div>
            </div>
          </div>
          <CommandLine />
        </div>
      </main>
      <StatusBar />
      <BrandCard />
    </div>
  );
}
